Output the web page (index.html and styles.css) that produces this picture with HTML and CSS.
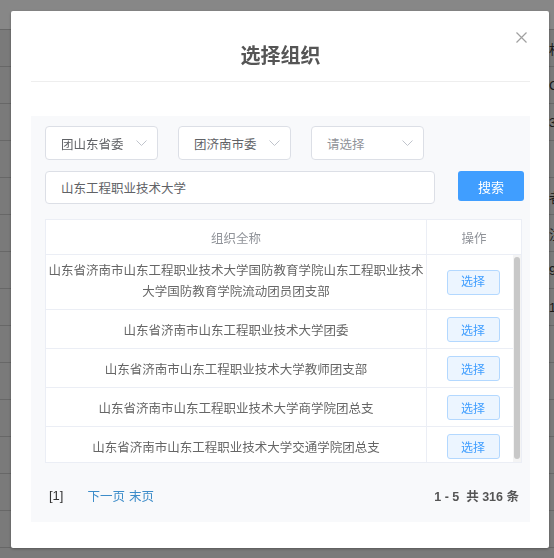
FILE: index.html
```html
<!doctype html>
<html lang="zh-CN">
  <head>
    <meta charset="UTF-8" />
    <meta name="viewport" content="width=device-width, initial-scale=1.0" />
    <title>选择组织</title>
    <link rel="stylesheet" href="styles.css">
  </head>
  <body>
    <!-- list page underneath the dialog -->
    <div class="page">
      <div class="page-head"></div>
      <div class="page-row"><span class="page-cell">析</span></div>
      <div class="page-row"><span class="page-cell">C</span></div>
      <div class="page-row"><span class="page-cell">3</span></div>
      <div class="page-row"></div>
      <div class="page-row"><span class="page-cell">者</span></div>
      <div class="page-row"><span class="page-cell">注</span></div>
      <div class="page-row"><span class="page-cell">9</span></div>
      <div class="page-row"><span class="page-cell">1</span></div>
      <div class="page-row"></div>
      <div class="page-row"></div>
      <div class="page-row"></div>
      <div class="page-row"></div>
      <div class="page-row"></div>
      <div class="page-row"></div>
      <div class="page-row"></div>
    </div>
    <div class="mask"></div>

    <div class="dialog">
      <div class="dialog-header">
        <h2 class="dialog-title">选择组织</h2>
        <button class="dialog-close" type="button" aria-label="关闭">
          <svg width="11" height="11" viewBox="0 0 11 11"><path d="M0.5 0.5l10 10M10.5 0.5l-10 10" stroke="#a0a0a0" stroke-width="1.2" fill="none"/></svg>
        </button>
      </div>

      <div class="dialog-body">
        <div class="org-panel">
          <div class="filter-row">
            <div class="select">
              <span>团山东省委</span>
              <svg class="chevron" width="11" height="6" viewBox="0 0 11 6"><path d="M0.5 0.5l5 5 5-5" stroke="#c0c4cc" fill="none"/></svg>
            </div>
            <div class="select">
              <span>团济南市委</span>
              <svg class="chevron" width="11" height="6" viewBox="0 0 11 6"><path d="M0.5 0.5l5 5 5-5" stroke="#c0c4cc" fill="none"/></svg>
            </div>
            <div class="select">
              <span class="placeholder">请选择</span>
              <svg class="chevron" width="11" height="6" viewBox="0 0 11 6"><path d="M0.5 0.5l5 5 5-5" stroke="#c0c4cc" fill="none"/></svg>
            </div>
          </div>

          <div class="search-row">
            <input class="search-input" type="text" value="山东工程职业技术大学" />
            <button class="search-btn" type="button">搜索</button>
          </div>

          <div class="org-table">
            <div class="org-head">
              <div class="col-name">组织全称</div>
              <div class="col-op">操作</div>
            </div>
            <div class="org-body">
              <div class="org-rows">
                <div class="org-row tall">
                  <div class="col-name">山东省济南市山东工程职业技术大学国防教育学院山东工程职业技术<br>大学国防教育学院流动团员团支部</div>
                  <div class="col-op"><button class="pick-btn" type="button">选择</button></div>
                </div>
                <div class="org-row">
                  <div class="col-name">山东省济南市山东工程职业技术大学团委</div>
                  <div class="col-op"><button class="pick-btn" type="button">选择</button></div>
                </div>
                <div class="org-row">
                  <div class="col-name">山东省济南市山东工程职业技术大学教师团支部</div>
                  <div class="col-op"><button class="pick-btn" type="button">选择</button></div>
                </div>
                <div class="org-row">
                  <div class="col-name">山东省济南市山东工程职业技术大学商学院团总支</div>
                  <div class="col-op"><button class="pick-btn" type="button">选择</button></div>
                </div>
                <div class="org-row">
                  <div class="col-name">山东省济南市山东工程职业技术大学交通学院团总支</div>
                  <div class="col-op"><button class="pick-btn" type="button">选择</button></div>
                </div>
              </div>
              <div class="scroll-track"><div class="scroll-thumb"></div></div>
            </div>
          </div>

          <div class="pager">
            <span class="pager-current">[1]</span>
            <a class="pager-link" href="#">下一页</a>
            <a class="pager-link" href="#">末页</a>
            <span class="pager-total">1 - 5&nbsp;&nbsp;共 316 条</span>
          </div>
        </div>
      </div>
    </div>
  </body>
</html>
```

FILE: styles.css
```css
html, body {
  margin: 0;
  padding: 0;
}

body {
  width: 554px;
  height: 558px;
  overflow: hidden;
  font-family: "Liberation Sans", "Noto Sans CJK SC", sans-serif;
  font-size: 12.5px;
  color: #666;
  background: #fff;
}

/* page behind the mask */
.page {
  width: 554px;
}

.page-head {
  height: 29px;
  background: #fff;
}

.page-row {
  height: 36px;
  border-top: 1px solid #c2c2c2;
  background: #e6e6e6;
  display: flex;
  align-items: center;
  padding-left: 549px;
  font-size: 13px;
  color: #333;
}

.page-cell {
  white-space: nowrap;
}

.mask {
  position: fixed;
  inset: 0;
  background: rgba(0, 0, 0, 0.47);
}

/* dialog */
.dialog {
  position: fixed;
  left: 11px;
  top: 11px;
  width: 538px;
  height: 537px;
  background: #fff;
  border-radius: 2px;
  box-shadow: 0 1px 3px rgba(0, 0, 0, 0.3);
}

.dialog-header {
  margin: 0 19px 0 20px;
  padding: 35px 0 15px;
  border-bottom: 1px solid #eeeeee;
  display: flex;
  justify-content: center;
}

.dialog-title {
  margin: 0;
  font-size: 20px;
  line-height: 20px;
  font-weight: bold;
  color: #555;
}

.dialog-close {
  position: absolute;
  top: 21px;
  right: 22px;
  width: 11px;
  height: 11px;
  padding: 0;
  border: 0;
  background: none;
  display: flex;
  cursor: pointer;
}

.dialog-body {
  padding: 34px 19px 0 20px;
}

.org-panel {
  background: #f8f9fb;
  padding: 10px 6px 17px 14px;
}

.filter-row {
  display: flex;
  gap: 20px;
}

.select {
  box-sizing: border-box;
  width: 113px;
  height: 34px;
  padding: 0 10px 0 15px;
  border: 1px solid #dcdfe6;
  border-radius: 4px;
  background: #fff;
  display: flex;
  align-items: center;
  justify-content: space-between;
  color: #606266;
}

.select .placeholder {
  color: #909399;
}

.chevron {
  display: block;
}

.search-row {
  display: flex;
  align-items: flex-start;
  margin-top: 11px;
}

.search-input {
  box-sizing: border-box;
  width: 390px;
  height: 33px;
  margin: 0;
  padding: 0 15px;
  border: 1px solid #dcdfe6;
  border-radius: 4px;
  background: #fff;
  font: inherit;
  color: #606266;
  outline: none;
}

.search-btn {
  width: 66px;
  height: 30px;
  margin-left: 23px;
  padding: 0;
  border: 0;
  border-radius: 3px;
  background: #409eff;
  color: #fff;
  font: inherit;
  font-size: 13px;
}

/* organisation table */
.org-table {
  width: 477px;
  margin-top: 15px;
  border: 1px solid #ebeef5;
  box-sizing: border-box;
  background: #fff;
}

.org-head {
  display: flex;
  height: 34px;
  border-bottom: 1px solid #ebeef5;
  color: #909399;
}

.org-head > div,
.org-row > div {
  display: flex;
  align-items: center;
  justify-content: center;
  text-align: center;
}

.col-name {
  width: 380px;
  border-right: 1px solid #ebeef5;
}

.org-head .col-op {
  flex: 1;
}

.org-body {
  display: flex;
  height: 207px;
  overflow: hidden;
}

.org-rows {
  flex: 1;
}

.org-row {
  display: flex;
  height: 38px;
  border-bottom: 1px solid #ebeef5;
}

.org-row.tall {
  height: 54px;
  line-height: 21px;
}

.org-row .col-op {
  flex: 1;
  padding-left: 6px;
}

.pick-btn {
  width: 53px;
  height: 25px;
  padding: 0;
  border: 1px solid #b3d8ff;
  border-radius: 3px;
  background: #ecf5ff;
  color: #409eff;
  font: inherit;
  font-size: 12px;
}

.scroll-track {
  width: 8px;
  padding: 2px 1px 3px 1px;
  box-sizing: border-box;
  background: #f4f4f4;
}

.scroll-thumb {
  height: 100%;
  border-radius: 3px;
  background: #c8c8c8;
}

/* pagination */
.pager {
  display: flex;
  align-items: center;
  height: 20px;
  margin-top: 22px;
  padding: 0 5px 0 4px;
  font-size: 12.5px;
}

.pager-current {
  color: #333;
  font-size: 13px;
  margin-right: 24px;
}

.pager-link {
  color: #3c8cc9;
  text-decoration: none;
  margin-right: 4px;
}

.pager-total {
  margin-left: auto;
  font-weight: bold;
  color: #555;
}
```
